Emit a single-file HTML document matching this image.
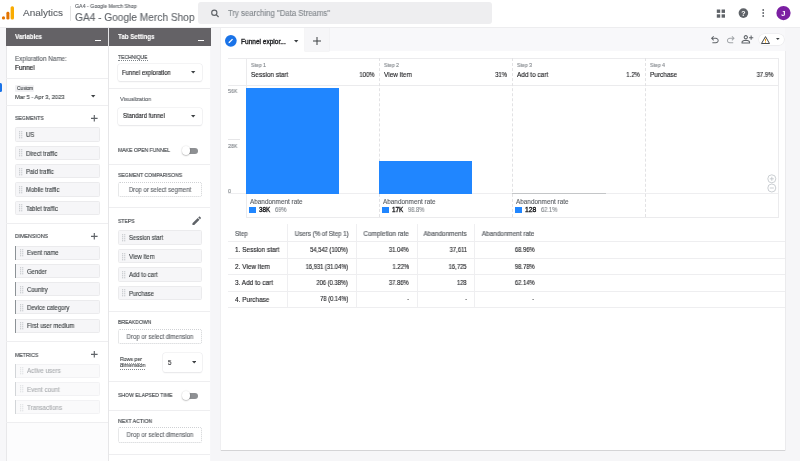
<!DOCTYPE html>
<html><head><meta charset="utf-8"><style>
html,body{margin:0;padding:0;width:800px;height:461px;overflow:hidden;background:#f7f7f9}
body{position:relative;font-family:"Liberation Sans", sans-serif}
body>div{position:absolute}
.t{white-space:nowrap;will-change:transform;-webkit-text-stroke:0.12px currentColor}
</style></head><body>
<div style="left:0px;top:0px;width:800px;height:461px;background:#f7f7f9"></div>
<div style="left:0px;top:0px;width:800px;height:27px;background:#fff"></div>
<div style="left:0px;top:27px;width:800px;height:1px;background:#ededef"></div>
<svg style="position:absolute;left:0;top:0" width="20" height="24"><circle cx="3.5" cy="17.9" r="1.6" fill="#e37400"/><rect x="6.4" y="11.8" width="3" height="7.8" rx="1.4" fill="#e37400"/><rect x="10.6" y="6.2" width="3.4" height="13.4" rx="1.5" fill="#f9ab00"/></svg>
<div class="t" style="left:23px;transform-origin:0 50%;top:6.14px;font-size:9.8px;line-height:13.72px;color:#5f6368;font-weight:400;transform:scaleX(1.0203);">Analytics</div>
<div style="left:70px;top:6px;width:0.8px;height:15px;background:#e3e3e3"></div>
<div class="t" style="left:75px;transform-origin:0 50%;top:3.09px;font-size:5.3px;line-height:7.42px;color:#5f6368;font-weight:400;transform:scaleX(0.9884);">GA4 - Google Merch Shop</div>
<div class="t" style="left:75px;transform-origin:0 50%;top:9.85px;font-size:10.5px;line-height:14.70px;color:#5f6368;font-weight:400;transform:scaleX(0.9658);">GA4 - Google Merch Shop</div>
<div style="left:198.3px;top:2.2px;width:294px;height:21.4px;background:#eeeef0;border-radius:3px"></div>
<svg style="position:absolute;left:210px;top:9px" width="10" height="9" viewBox="0 0 10 9"><circle cx="4.3" cy="3.7" r="2.6" fill="none" stroke="#5f6368" stroke-width="1.15"/><line x1="6.2" y1="5.6" x2="8.6" y2="8" stroke="#5f6368" stroke-width="1.3"/></svg>
<div class="t" style="left:227.8px;transform-origin:0 50%;top:7.72px;font-size:8.4px;line-height:11.76px;color:#80868b;font-weight:400;transform:scaleX(0.9281);">Try searching "Data Streams"</div>
<svg style="position:absolute;left:716px;top:8.5px" width="10" height="9"><rect x="0.8" y="0.5" width="3.4" height="3.4" fill="#5f6368"/><rect x="5.6" y="0.5" width="3.4" height="3.4" fill="#5f6368"/><rect x="0.8" y="5.3" width="3.4" height="3.4" fill="#5f6368"/><rect x="5.6" y="5.3" width="3.4" height="3.4" fill="#5f6368"/></svg>
<svg style="position:absolute;left:738px;top:8px;will-change:transform" width="11" height="11"><circle cx="5.4" cy="5.1" r="4.8" fill="#5f6368"/><text x="5.45" y="7.7" font-family="Liberation Sans" font-weight="700" font-size="7" fill="#fff" text-anchor="middle">?</text></svg>
<svg style="position:absolute;left:761px;top:9px" width="5" height="9"><circle cx="2.2" cy="1" r="0.9" fill="#5f6368"/><circle cx="2.2" cy="4" r="0.9" fill="#5f6368"/><circle cx="2.2" cy="7" r="0.9" fill="#5f6368"/></svg>
<svg style="position:absolute;left:776px;top:6px;will-change:transform" width="15" height="15"><circle cx="7.5" cy="7.1" r="7.1" fill="#7b1fa2"/><text x="7.3" y="9.8" font-family="Liberation Sans" font-weight="700" font-size="7.5" fill="#fff" text-anchor="middle">J</text></svg>
<div style="left:0px;top:82.5px;width:1.7px;height:9.5px;background:#1a73e8;border-radius:0 1.5px 1.5px 0"></div>
<div style="left:6px;top:28px;width:102.3px;height:18px;background:#646266"></div>
<div class="t" style="left:15px;transform-origin:0 50%;top:32.14px;font-size:6.8px;line-height:9.52px;color:#fff;font-weight:700;transform:scaleX(0.9042);">Variables</div>
<div style="left:95px;top:40px;width:6px;height:1.2px;background:#fff"></div>
<div style="left:6px;top:46px;width:102.3px;height:415px;background:#fff"></div>
<div style="left:6px;top:423px;width:102.3px;height:38px;background:#fcfcfd"></div>
<div style="left:5.5px;top:46px;width:0.8px;height:415px;background:#e8e8ea"></div>
<div style="left:108.3px;top:28px;width:0.8px;height:433px;background:#e6e6e8"></div>
<div class="t" style="left:15.2px;transform-origin:0 50%;top:54.30px;font-size:6.5px;line-height:9.10px;color:#5f6368;font-weight:400;transform:scaleX(0.9685);">Exploration Name:</div>
<div class="t" style="left:15.2px;transform-origin:0 50%;top:63.45px;font-size:6.5px;line-height:9.10px;color:#202124;font-weight:400;transform:scaleX(0.9811);-webkit-text-stroke:0.18px currentColor;">Funnel</div>
<div style="left:6px;top:78.2px;width:102.3px;height:0.8px;background:#eeeef0"></div>
<div style="left:14.9px;top:84.9px;width:19.5px;height:6.9px;background:#f1f1f3;border-radius:1px"></div>
<div class="t" style="left:17px;transform-origin:0 50%;top:85.00px;font-size:5px;line-height:7.00px;color:#3c4043;font-weight:400;transform:scaleX(0.9458);-webkit-text-stroke:0.1px currentColor;">Custom</div>
<div class="t" style="left:15.2px;transform-origin:0 50%;top:93.15px;font-size:6px;line-height:8.40px;color:#3c4043;font-weight:400;transform:scaleX(0.9655);">Mar 5 - Apr 3, 2023</div>
<svg style="position:absolute;left:91.2px;top:95.1px" width="4.9" height="3"><path d="M0 0 L4.4 0 L2.2 2.4200000000000004Z" fill="#3c4043"/></svg>
<div style="left:6px;top:105.2px;width:102.3px;height:0.8px;background:#eeeef0"></div>
<div class="t" style="left:15px;transform-origin:0 50%;top:114.40px;font-size:6.0px;line-height:8.40px;color:#4a4e52;font-weight:400;transform:scaleX(0.8523);-webkit-text-stroke:0.18px currentColor;">SEGMENTS</div>
<svg style="position:absolute;left:89.7px;top:113.9px" width="8.6" height="8.6"><path d="M1 4.3H7.6M4.3 1V7.6" stroke="#5f6368" stroke-width="1.15"/></svg>
<div style="left:14.8px;top:127.3px;width:85px;height:14.4px;background:#f6f6f8;border:0.6px solid #ebebed;box-sizing:border-box;border-radius:1.5px"></div>
<svg style="position:absolute;left:19.2px;top:130.9px" width="4" height="8"><circle cx="0.7" cy="0.7" r="0.55" fill="#a6abb0"/><circle cx="2.8" cy="0.7" r="0.55" fill="#a6abb0"/><circle cx="0.7" cy="2.7" r="0.55" fill="#a6abb0"/><circle cx="2.8" cy="2.7" r="0.55" fill="#a6abb0"/><circle cx="0.7" cy="4.7" r="0.55" fill="#a6abb0"/><circle cx="2.8" cy="4.7" r="0.55" fill="#a6abb0"/><circle cx="0.7" cy="6.7" r="0.55" fill="#a6abb0"/><circle cx="2.8" cy="6.7" r="0.55" fill="#a6abb0"/></svg>
<div class="t" style="left:25.7px;transform-origin:0 50%;top:130.25px;font-size:6.5px;line-height:9.10px;color:#3c4043;font-weight:400;transform:scaleX(0.9100);">US</div>
<div style="left:14.8px;top:145.68px;width:85px;height:14.4px;background:#f6f6f8;border:0.6px solid #ebebed;box-sizing:border-box;border-radius:1.5px"></div>
<svg style="position:absolute;left:19.2px;top:149.28000000000003px" width="4" height="8"><circle cx="0.7" cy="0.7" r="0.55" fill="#a6abb0"/><circle cx="2.8" cy="0.7" r="0.55" fill="#a6abb0"/><circle cx="0.7" cy="2.7" r="0.55" fill="#a6abb0"/><circle cx="2.8" cy="2.7" r="0.55" fill="#a6abb0"/><circle cx="0.7" cy="4.7" r="0.55" fill="#a6abb0"/><circle cx="2.8" cy="4.7" r="0.55" fill="#a6abb0"/><circle cx="0.7" cy="6.7" r="0.55" fill="#a6abb0"/><circle cx="2.8" cy="6.7" r="0.55" fill="#a6abb0"/></svg>
<div class="t" style="left:25.7px;transform-origin:0 50%;top:148.63px;font-size:6.5px;line-height:9.10px;color:#3c4043;font-weight:400;transform:scaleX(0.9100);">Direct traffic</div>
<div style="left:14.8px;top:164.06px;width:85px;height:14.4px;background:#f6f6f8;border:0.6px solid #ebebed;box-sizing:border-box;border-radius:1.5px"></div>
<svg style="position:absolute;left:19.2px;top:167.66000000000003px" width="4" height="8"><circle cx="0.7" cy="0.7" r="0.55" fill="#a6abb0"/><circle cx="2.8" cy="0.7" r="0.55" fill="#a6abb0"/><circle cx="0.7" cy="2.7" r="0.55" fill="#a6abb0"/><circle cx="2.8" cy="2.7" r="0.55" fill="#a6abb0"/><circle cx="0.7" cy="4.7" r="0.55" fill="#a6abb0"/><circle cx="2.8" cy="4.7" r="0.55" fill="#a6abb0"/><circle cx="0.7" cy="6.7" r="0.55" fill="#a6abb0"/><circle cx="2.8" cy="6.7" r="0.55" fill="#a6abb0"/></svg>
<div class="t" style="left:25.7px;transform-origin:0 50%;top:167.01px;font-size:6.5px;line-height:9.10px;color:#3c4043;font-weight:400;transform:scaleX(0.9100);">Paid traffic</div>
<div style="left:14.8px;top:182.44px;width:85px;height:14.4px;background:#f6f6f8;border:0.6px solid #ebebed;box-sizing:border-box;border-radius:1.5px"></div>
<svg style="position:absolute;left:19.2px;top:186.04000000000002px" width="4" height="8"><circle cx="0.7" cy="0.7" r="0.55" fill="#a6abb0"/><circle cx="2.8" cy="0.7" r="0.55" fill="#a6abb0"/><circle cx="0.7" cy="2.7" r="0.55" fill="#a6abb0"/><circle cx="2.8" cy="2.7" r="0.55" fill="#a6abb0"/><circle cx="0.7" cy="4.7" r="0.55" fill="#a6abb0"/><circle cx="2.8" cy="4.7" r="0.55" fill="#a6abb0"/><circle cx="0.7" cy="6.7" r="0.55" fill="#a6abb0"/><circle cx="2.8" cy="6.7" r="0.55" fill="#a6abb0"/></svg>
<div class="t" style="left:25.7px;transform-origin:0 50%;top:185.39px;font-size:6.5px;line-height:9.10px;color:#3c4043;font-weight:400;transform:scaleX(0.9100);">Mobile traffic</div>
<div style="left:14.8px;top:200.82px;width:85px;height:14.4px;background:#f6f6f8;border:0.6px solid #ebebed;box-sizing:border-box;border-radius:1.5px"></div>
<svg style="position:absolute;left:19.2px;top:204.42000000000002px" width="4" height="8"><circle cx="0.7" cy="0.7" r="0.55" fill="#a6abb0"/><circle cx="2.8" cy="0.7" r="0.55" fill="#a6abb0"/><circle cx="0.7" cy="2.7" r="0.55" fill="#a6abb0"/><circle cx="2.8" cy="2.7" r="0.55" fill="#a6abb0"/><circle cx="0.7" cy="4.7" r="0.55" fill="#a6abb0"/><circle cx="2.8" cy="4.7" r="0.55" fill="#a6abb0"/><circle cx="0.7" cy="6.7" r="0.55" fill="#a6abb0"/><circle cx="2.8" cy="6.7" r="0.55" fill="#a6abb0"/></svg>
<div class="t" style="left:25.7px;transform-origin:0 50%;top:203.77px;font-size:6.5px;line-height:9.10px;color:#3c4043;font-weight:400;transform:scaleX(0.9100);">Tablet traffic</div>
<div style="left:6px;top:222.5px;width:102.3px;height:0.8px;background:#eeeef0"></div>
<div class="t" style="left:15px;transform-origin:0 50%;top:232.40px;font-size:6.0px;line-height:8.40px;color:#4a4e52;font-weight:400;transform:scaleX(0.8681);-webkit-text-stroke:0.18px currentColor;">DIMENSIONS</div>
<svg style="position:absolute;left:89.7px;top:231.89999999999998px" width="8.6" height="8.6"><path d="M1 4.3H7.6M4.3 1V7.6" stroke="#5f6368" stroke-width="1.15"/></svg>
<div style="left:15px;top:245.8px;width:84.7px;height:14px;background:#f6f6f8;border:0.6px solid #ebebed;box-sizing:border-box;border-radius:1.5px"></div>
<div style="left:15px;top:245.8px;width:1.3px;height:14px;background:#8c9296"></div>
<svg style="position:absolute;left:20.2px;top:249.10000000000002px" width="4" height="8"><circle cx="0.7" cy="0.7" r="0.55" fill="#a6abb0"/><circle cx="2.8" cy="0.7" r="0.55" fill="#a6abb0"/><circle cx="0.7" cy="2.7" r="0.55" fill="#a6abb0"/><circle cx="2.8" cy="2.7" r="0.55" fill="#a6abb0"/><circle cx="0.7" cy="4.7" r="0.55" fill="#a6abb0"/><circle cx="2.8" cy="4.7" r="0.55" fill="#a6abb0"/><circle cx="0.7" cy="6.7" r="0.55" fill="#a6abb0"/><circle cx="2.8" cy="6.7" r="0.55" fill="#a6abb0"/></svg>
<div class="t" style="left:26.9px;transform-origin:0 50%;top:248.45px;font-size:6.5px;line-height:9.10px;color:#3c4043;font-weight:400;transform:scaleX(0.9100);">Event name</div>
<div style="left:15px;top:264.0px;width:84.7px;height:14px;background:#f6f6f8;border:0.6px solid #ebebed;box-sizing:border-box;border-radius:1.5px"></div>
<div style="left:15px;top:264.0px;width:1.3px;height:14px;background:#8c9296"></div>
<svg style="position:absolute;left:20.2px;top:267.3px" width="4" height="8"><circle cx="0.7" cy="0.7" r="0.55" fill="#a6abb0"/><circle cx="2.8" cy="0.7" r="0.55" fill="#a6abb0"/><circle cx="0.7" cy="2.7" r="0.55" fill="#a6abb0"/><circle cx="2.8" cy="2.7" r="0.55" fill="#a6abb0"/><circle cx="0.7" cy="4.7" r="0.55" fill="#a6abb0"/><circle cx="2.8" cy="4.7" r="0.55" fill="#a6abb0"/><circle cx="0.7" cy="6.7" r="0.55" fill="#a6abb0"/><circle cx="2.8" cy="6.7" r="0.55" fill="#a6abb0"/></svg>
<div class="t" style="left:26.9px;transform-origin:0 50%;top:266.65px;font-size:6.5px;line-height:9.10px;color:#3c4043;font-weight:400;transform:scaleX(0.9100);">Gender</div>
<div style="left:15px;top:282.2px;width:84.7px;height:14px;background:#f6f6f8;border:0.6px solid #ebebed;box-sizing:border-box;border-radius:1.5px"></div>
<div style="left:15px;top:282.2px;width:1.3px;height:14px;background:#8c9296"></div>
<svg style="position:absolute;left:20.2px;top:285.5px" width="4" height="8"><circle cx="0.7" cy="0.7" r="0.55" fill="#a6abb0"/><circle cx="2.8" cy="0.7" r="0.55" fill="#a6abb0"/><circle cx="0.7" cy="2.7" r="0.55" fill="#a6abb0"/><circle cx="2.8" cy="2.7" r="0.55" fill="#a6abb0"/><circle cx="0.7" cy="4.7" r="0.55" fill="#a6abb0"/><circle cx="2.8" cy="4.7" r="0.55" fill="#a6abb0"/><circle cx="0.7" cy="6.7" r="0.55" fill="#a6abb0"/><circle cx="2.8" cy="6.7" r="0.55" fill="#a6abb0"/></svg>
<div class="t" style="left:26.9px;transform-origin:0 50%;top:284.85px;font-size:6.5px;line-height:9.10px;color:#3c4043;font-weight:400;transform:scaleX(0.9100);">Country</div>
<div style="left:15px;top:300.4px;width:84.7px;height:14px;background:#f6f6f8;border:0.6px solid #ebebed;box-sizing:border-box;border-radius:1.5px"></div>
<div style="left:15px;top:300.4px;width:1.3px;height:14px;background:#8c9296"></div>
<svg style="position:absolute;left:20.2px;top:303.7px" width="4" height="8"><circle cx="0.7" cy="0.7" r="0.55" fill="#a6abb0"/><circle cx="2.8" cy="0.7" r="0.55" fill="#a6abb0"/><circle cx="0.7" cy="2.7" r="0.55" fill="#a6abb0"/><circle cx="2.8" cy="2.7" r="0.55" fill="#a6abb0"/><circle cx="0.7" cy="4.7" r="0.55" fill="#a6abb0"/><circle cx="2.8" cy="4.7" r="0.55" fill="#a6abb0"/><circle cx="0.7" cy="6.7" r="0.55" fill="#a6abb0"/><circle cx="2.8" cy="6.7" r="0.55" fill="#a6abb0"/></svg>
<div class="t" style="left:26.9px;transform-origin:0 50%;top:303.05px;font-size:6.5px;line-height:9.10px;color:#3c4043;font-weight:400;transform:scaleX(0.9100);">Device category</div>
<div style="left:15px;top:318.6px;width:84.7px;height:14px;background:#f6f6f8;border:0.6px solid #ebebed;box-sizing:border-box;border-radius:1.5px"></div>
<div style="left:15px;top:318.6px;width:1.3px;height:14px;background:#8c9296"></div>
<svg style="position:absolute;left:20.2px;top:321.90000000000003px" width="4" height="8"><circle cx="0.7" cy="0.7" r="0.55" fill="#a6abb0"/><circle cx="2.8" cy="0.7" r="0.55" fill="#a6abb0"/><circle cx="0.7" cy="2.7" r="0.55" fill="#a6abb0"/><circle cx="2.8" cy="2.7" r="0.55" fill="#a6abb0"/><circle cx="0.7" cy="4.7" r="0.55" fill="#a6abb0"/><circle cx="2.8" cy="4.7" r="0.55" fill="#a6abb0"/><circle cx="0.7" cy="6.7" r="0.55" fill="#a6abb0"/><circle cx="2.8" cy="6.7" r="0.55" fill="#a6abb0"/></svg>
<div class="t" style="left:26.9px;transform-origin:0 50%;top:321.25px;font-size:6.5px;line-height:9.10px;color:#3c4043;font-weight:400;transform:scaleX(0.9100);">First user medium</div>
<div style="left:6px;top:340.6px;width:102.3px;height:0.8px;background:#eeeef0"></div>
<div class="t" style="left:15px;transform-origin:0 50%;top:350.50px;font-size:6.0px;line-height:8.40px;color:#4a4e52;font-weight:400;transform:scaleX(0.8630);-webkit-text-stroke:0.18px currentColor;">METRICS</div>
<svg style="position:absolute;left:89.7px;top:350.3px" width="8.6" height="8.6"><path d="M1 4.3H7.6M4.3 1V7.6" stroke="#5f6368" stroke-width="1.15"/></svg>
<div style="left:15px;top:363.5px;width:84.7px;height:14.2px;background:#fafafb;border:0.6px solid #f2f2f4;box-sizing:border-box;border-radius:1.5px"></div>
<div style="left:15px;top:363.5px;width:1.3px;height:14.2px;background:#d2d5d8"></div>
<svg style="position:absolute;left:20.2px;top:366.90000000000003px" width="4" height="8"><circle cx="0.7" cy="0.7" r="0.55" fill="#cfd2d5"/><circle cx="2.8" cy="0.7" r="0.55" fill="#cfd2d5"/><circle cx="0.7" cy="2.7" r="0.55" fill="#cfd2d5"/><circle cx="2.8" cy="2.7" r="0.55" fill="#cfd2d5"/><circle cx="0.7" cy="4.7" r="0.55" fill="#cfd2d5"/><circle cx="2.8" cy="4.7" r="0.55" fill="#cfd2d5"/><circle cx="0.7" cy="6.7" r="0.55" fill="#cfd2d5"/><circle cx="2.8" cy="6.7" r="0.55" fill="#cfd2d5"/></svg>
<div class="t" style="left:26.9px;transform-origin:0 50%;top:366.25px;font-size:6.5px;line-height:9.10px;color:#abaeb1;font-weight:400;transform:scaleX(0.9500);">Active users</div>
<div style="left:15px;top:381.85px;width:84.7px;height:14.2px;background:#fafafb;border:0.6px solid #f2f2f4;box-sizing:border-box;border-radius:1.5px"></div>
<div style="left:15px;top:381.85px;width:1.3px;height:14.2px;background:#d2d5d8"></div>
<svg style="position:absolute;left:20.2px;top:385.25000000000006px" width="4" height="8"><circle cx="0.7" cy="0.7" r="0.55" fill="#cfd2d5"/><circle cx="2.8" cy="0.7" r="0.55" fill="#cfd2d5"/><circle cx="0.7" cy="2.7" r="0.55" fill="#cfd2d5"/><circle cx="2.8" cy="2.7" r="0.55" fill="#cfd2d5"/><circle cx="0.7" cy="4.7" r="0.55" fill="#cfd2d5"/><circle cx="2.8" cy="4.7" r="0.55" fill="#cfd2d5"/><circle cx="0.7" cy="6.7" r="0.55" fill="#cfd2d5"/><circle cx="2.8" cy="6.7" r="0.55" fill="#cfd2d5"/></svg>
<div class="t" style="left:26.9px;transform-origin:0 50%;top:384.60px;font-size:6.5px;line-height:9.10px;color:#abaeb1;font-weight:400;transform:scaleX(0.9500);">Event count</div>
<div style="left:15px;top:400.2px;width:84.7px;height:14.2px;background:#fafafb;border:0.6px solid #f2f2f4;box-sizing:border-box;border-radius:1.5px"></div>
<div style="left:15px;top:400.2px;width:1.3px;height:14.2px;background:#d2d5d8"></div>
<svg style="position:absolute;left:20.2px;top:403.6px" width="4" height="8"><circle cx="0.7" cy="0.7" r="0.55" fill="#cfd2d5"/><circle cx="2.8" cy="0.7" r="0.55" fill="#cfd2d5"/><circle cx="0.7" cy="2.7" r="0.55" fill="#cfd2d5"/><circle cx="2.8" cy="2.7" r="0.55" fill="#cfd2d5"/><circle cx="0.7" cy="4.7" r="0.55" fill="#cfd2d5"/><circle cx="2.8" cy="4.7" r="0.55" fill="#cfd2d5"/><circle cx="0.7" cy="6.7" r="0.55" fill="#cfd2d5"/><circle cx="2.8" cy="6.7" r="0.55" fill="#cfd2d5"/></svg>
<div class="t" style="left:26.9px;transform-origin:0 50%;top:402.95px;font-size:6.5px;line-height:9.10px;color:#abaeb1;font-weight:400;transform:scaleX(0.9500);">Transactions</div>
<div style="left:6px;top:422.2px;width:102.3px;height:0.8px;background:#eeeef0"></div>
<div style="left:109.1px;top:28px;width:101.9px;height:18px;background:#646266"></div>
<div class="t" style="left:118px;transform-origin:0 50%;top:32.14px;font-size:6.8px;line-height:9.52px;color:#fff;font-weight:700;transform:scaleX(0.9061);">Tab Settings</div>
<div style="left:198px;top:40px;width:6px;height:1.2px;background:#fff"></div>
<div style="left:109.1px;top:46px;width:101.4px;height:415px;background:#fff"></div>
<div style="left:210.5px;top:28px;width:0.8px;height:433px;background:#e6e6e8"></div>
<div class="t" style="left:118.1px;transform-origin:0 50%;top:52.65px;font-size:6.0px;line-height:8.40px;color:#4a4e52;font-weight:400;transform:scaleX(0.8347);-webkit-text-stroke:0.18px currentColor;">TECHNIQUE</div>
<div style="left:118px;top:60px;width:30px;height:0;border-top:0.8px dotted #80868b"></div>
<div style="left:117.7px;top:63.7px;width:84px;height:17.6px;background:#fff;border-radius:2.5px;box-shadow:0 0 0 0.6px #ededef, 0 0.8px 1.3px #e2e2e4"></div>
<div class="t" style="left:122.3px;transform-origin:0 50%;top:67.60px;font-size:6.5px;line-height:9.10px;color:#202124;font-weight:400;transform:scaleX(0.9124);">Funnel exploration</div>
<svg style="position:absolute;left:191.39999999999998px;top:71.3px" width="4.9" height="3"><path d="M0 0 L4.4 0 L2.2 2.4200000000000004Z" fill="#3c4043"/></svg>
<div style="left:109.1px;top:88px;width:101.4px;height:0.8px;background:#eeeef0"></div>
<div class="t" style="left:119.8px;transform-origin:0 50%;top:95.19px;font-size:5.8px;line-height:8.12px;color:#5f6368;font-weight:400;transform:scaleX(0.9583);">Visualization</div>
<div style="left:117.9px;top:107.8px;width:83.8px;height:17.3px;background:#fff;border-radius:2.5px;box-shadow:0 0 0 0.6px #ededef, 0 0.8px 1.3px #e2e2e4"></div>
<div class="t" style="left:122.5px;transform-origin:0 50%;top:111.05px;font-size:6.5px;line-height:9.10px;color:#202124;font-weight:400;transform:scaleX(0.9106);">Standard funnel</div>
<svg style="position:absolute;left:191.39999999999998px;top:115.25px" width="4.9" height="3"><path d="M0 0 L4.4 0 L2.2 2.4200000000000004Z" fill="#3c4043"/></svg>
<div class="t" style="left:118px;transform-origin:0 50%;top:146.10px;font-size:6.0px;line-height:8.40px;color:#4a4e52;font-weight:400;transform:scaleX(0.8475);-webkit-text-stroke:0.18px currentColor;">MAKE OPEN FUNNEL</div>
<div style="left:185.3px;top:147.5px;width:13px;height:6.2px;background:#8e9093;border-radius:3.1px"></div>
<div style="left:182.3px;top:146.4px;width:8.2px;height:8.2px;background:#fff;border-radius:50%;box-shadow:0 0.4px 1.4px rgba(0,0,0,0.4)"></div>
<div style="left:109.1px;top:163.6px;width:101.4px;height:0.8px;background:#eeeef0"></div>
<div class="t" style="left:118px;transform-origin:0 50%;top:171.30px;font-size:6.0px;line-height:8.40px;color:#4a4e52;font-weight:400;transform:scaleX(0.8470);-webkit-text-stroke:0.18px currentColor;">SEGMENT COMPARISONS</div>
<div style="left:117.8px;top:181.9px;width:84.4px;height:14.9px;border:0.9px dotted #cfd1d4;box-sizing:border-box;border-radius:2px"></div>
<div class="t" style="left:60.0px;width:200px;text-align:center;transform-origin:50% 50%;top:185.00px;font-size:6.5px;line-height:9.10px;color:#5f6368;font-weight:400;transform:scaleX(0.9285);">Drop or select segment</div>
<div style="left:109.1px;top:207.2px;width:101.4px;height:0.8px;background:#eeeef0"></div>
<div class="t" style="left:118px;transform-origin:0 50%;top:217.30px;font-size:6.0px;line-height:8.40px;color:#4a4e52;font-weight:400;transform:scaleX(0.8381);-webkit-text-stroke:0.18px currentColor;">STEPS</div>
<svg style="position:absolute;left:190.9px;top:215.3px" width="11.5" height="11.5" viewBox="0 0 24 24"><path d="M3 17.25V21h3.75L17.81 9.94l-3.75-3.75L3 17.25zM20.71 7.04a1 1 0 000-1.41l-2.34-2.34a1 1 0 00-1.41 0l-1.83 1.83 3.75 3.75 1.83-1.83z" fill="#5f6368"/></svg>
<div style="left:117.8px;top:230.4px;width:84.4px;height:14.6px;background:#f6f6f8;border:0.6px solid #ebebed;box-sizing:border-box;border-radius:1.5px"></div>
<svg style="position:absolute;left:121.8px;top:234.10000000000002px" width="4" height="8"><circle cx="0.7" cy="0.7" r="0.55" fill="#a6abb0"/><circle cx="2.8" cy="0.7" r="0.55" fill="#a6abb0"/><circle cx="0.7" cy="2.7" r="0.55" fill="#a6abb0"/><circle cx="2.8" cy="2.7" r="0.55" fill="#a6abb0"/><circle cx="0.7" cy="4.7" r="0.55" fill="#a6abb0"/><circle cx="2.8" cy="4.7" r="0.55" fill="#a6abb0"/><circle cx="0.7" cy="6.7" r="0.55" fill="#a6abb0"/><circle cx="2.8" cy="6.7" r="0.55" fill="#a6abb0"/></svg>
<div class="t" style="left:128.6px;transform-origin:0 50%;top:233.45px;font-size:6.5px;line-height:9.10px;color:#3c4043;font-weight:400;transform:scaleX(0.9100);">Session start</div>
<div style="left:117.8px;top:248.8px;width:84.4px;height:14.6px;background:#f6f6f8;border:0.6px solid #ebebed;box-sizing:border-box;border-radius:1.5px"></div>
<svg style="position:absolute;left:121.8px;top:252.5px" width="4" height="8"><circle cx="0.7" cy="0.7" r="0.55" fill="#a6abb0"/><circle cx="2.8" cy="0.7" r="0.55" fill="#a6abb0"/><circle cx="0.7" cy="2.7" r="0.55" fill="#a6abb0"/><circle cx="2.8" cy="2.7" r="0.55" fill="#a6abb0"/><circle cx="0.7" cy="4.7" r="0.55" fill="#a6abb0"/><circle cx="2.8" cy="4.7" r="0.55" fill="#a6abb0"/><circle cx="0.7" cy="6.7" r="0.55" fill="#a6abb0"/><circle cx="2.8" cy="6.7" r="0.55" fill="#a6abb0"/></svg>
<div class="t" style="left:128.6px;transform-origin:0 50%;top:251.85px;font-size:6.5px;line-height:9.10px;color:#3c4043;font-weight:400;transform:scaleX(0.9100);">View item</div>
<div style="left:117.8px;top:267.2px;width:84.4px;height:14.6px;background:#f6f6f8;border:0.6px solid #ebebed;box-sizing:border-box;border-radius:1.5px"></div>
<svg style="position:absolute;left:121.8px;top:270.9px" width="4" height="8"><circle cx="0.7" cy="0.7" r="0.55" fill="#a6abb0"/><circle cx="2.8" cy="0.7" r="0.55" fill="#a6abb0"/><circle cx="0.7" cy="2.7" r="0.55" fill="#a6abb0"/><circle cx="2.8" cy="2.7" r="0.55" fill="#a6abb0"/><circle cx="0.7" cy="4.7" r="0.55" fill="#a6abb0"/><circle cx="2.8" cy="4.7" r="0.55" fill="#a6abb0"/><circle cx="0.7" cy="6.7" r="0.55" fill="#a6abb0"/><circle cx="2.8" cy="6.7" r="0.55" fill="#a6abb0"/></svg>
<div class="t" style="left:128.6px;transform-origin:0 50%;top:270.25px;font-size:6.5px;line-height:9.10px;color:#3c4043;font-weight:400;transform:scaleX(0.9100);">Add to cart</div>
<div style="left:117.8px;top:285.6px;width:84.4px;height:14.6px;background:#f6f6f8;border:0.6px solid #ebebed;box-sizing:border-box;border-radius:1.5px"></div>
<svg style="position:absolute;left:121.8px;top:289.3px" width="4" height="8"><circle cx="0.7" cy="0.7" r="0.55" fill="#a6abb0"/><circle cx="2.8" cy="0.7" r="0.55" fill="#a6abb0"/><circle cx="0.7" cy="2.7" r="0.55" fill="#a6abb0"/><circle cx="2.8" cy="2.7" r="0.55" fill="#a6abb0"/><circle cx="0.7" cy="4.7" r="0.55" fill="#a6abb0"/><circle cx="2.8" cy="4.7" r="0.55" fill="#a6abb0"/><circle cx="0.7" cy="6.7" r="0.55" fill="#a6abb0"/><circle cx="2.8" cy="6.7" r="0.55" fill="#a6abb0"/></svg>
<div class="t" style="left:128.6px;transform-origin:0 50%;top:288.65px;font-size:6.5px;line-height:9.10px;color:#3c4043;font-weight:400;transform:scaleX(0.9100);">Purchase</div>
<div style="left:109.1px;top:311px;width:101.4px;height:0.8px;background:#eeeef0"></div>
<div class="t" style="left:118px;transform-origin:0 50%;top:317.80px;font-size:6.0px;line-height:8.40px;color:#4a4e52;font-weight:400;transform:scaleX(0.8489);-webkit-text-stroke:0.18px currentColor;">BREAKDOWN</div>
<div style="left:117.8px;top:329px;width:84.4px;height:15.3px;border:0.9px dotted #cfd1d4;box-sizing:border-box;border-radius:2px"></div>
<div class="t" style="left:60.0px;width:200px;text-align:center;transform-origin:50% 50%;top:332.30px;font-size:6.5px;line-height:9.10px;color:#5f6368;font-weight:400;transform:scaleX(0.9276);">Drop or select dimension</div>
<div class="t" style="left:119.7px;transform-origin:0 50%;top:355.47px;font-size:5.9px;line-height:8.26px;color:#3c4043;font-weight:400;transform:scaleX(0.8839);">Rows per</div>
<div class="t" style="left:119.7px;transform-origin:0 50%;top:361.37px;font-size:5.9px;line-height:8.26px;color:#3c4043;font-weight:400;transform:scaleX(0.9494);">dimension</div>
<div style="left:119.7px;top:362.9px;width:22.5px;height:0;border-top:0.8px dotted #a0a3a6"></div>
<div style="left:119.7px;top:369.2px;width:25.6px;height:0;border-top:0.8px dotted #80868b"></div>
<div style="left:162.6px;top:353px;width:39.4px;height:18.6px;background:#fff;border-radius:2.5px;box-shadow:0 0 0 0.6px #ededef, 0 0.8px 1.3px #e2e2e4"></div>
<div class="t" style="left:167.8px;transform-origin:0 50%;top:357.75px;font-size:6.5px;line-height:9.10px;color:#202124;font-weight:400;transform:scaleX(0.9100);">5</div>
<svg style="position:absolute;left:191.5px;top:361.1px" width="4.9" height="3"><path d="M0 0 L4.4 0 L2.2 2.4200000000000004Z" fill="#3c4043"/></svg>
<div style="left:109.1px;top:381px;width:101.4px;height:0.8px;background:#eeeef0"></div>
<div class="t" style="left:118px;transform-origin:0 50%;top:391.30px;font-size:6.0px;line-height:8.40px;color:#4a4e52;font-weight:400;transform:scaleX(0.8512);-webkit-text-stroke:0.18px currentColor;">SHOW ELAPSED TIME</div>
<div style="left:185.3px;top:392.5px;width:13px;height:6.2px;background:#8e9093;border-radius:3.1px"></div>
<div style="left:182.3px;top:391.4px;width:8.2px;height:8.2px;background:#fff;border-radius:50%;box-shadow:0 0.4px 1.4px rgba(0,0,0,0.4)"></div>
<div style="left:109.1px;top:409.6px;width:101.4px;height:0.8px;background:#eeeef0"></div>
<div class="t" style="left:118px;transform-origin:0 50%;top:416.80px;font-size:6.0px;line-height:8.40px;color:#4a4e52;font-weight:400;transform:scaleX(0.8545);-webkit-text-stroke:0.18px currentColor;">NEXT ACTION</div>
<div style="left:117.8px;top:427px;width:84.4px;height:16.2px;border:0.9px dotted #cfd1d4;box-sizing:border-box;border-radius:2px"></div>
<div class="t" style="left:60.0px;width:200px;text-align:center;transform-origin:50% 50%;top:430.15px;font-size:6.5px;line-height:9.10px;color:#5f6368;font-weight:400;transform:scaleX(0.9276);">Drop or select dimension</div>
<div style="left:109.1px;top:453.8px;width:101.4px;height:0.8px;background:#eeeef0"></div>
<div style="left:211.3px;top:28px;width:588.7px;height:433px;background:#f6f6f8"></div>
<div style="left:221px;top:28px;width:564.3px;height:23px;background:#f8f8fa"></div>
<div style="left:221px;top:51px;width:564.3px;height:399.5px;background:#fff"></div>
<div style="left:221px;top:450px;width:564.3px;height:1px;background:#d4d4d6"></div>
<div style="left:785px;top:51px;width:0.8px;height:400px;background:#ebebed"></div>
<div style="left:220.4px;top:28px;width:0.7px;height:423px;background:#efeff1"></div>
<div style="left:221px;top:28px;width:84px;height:23px;background:#fff"></div>
<svg style="position:absolute;left:224.95px;top:35.35px" width="12" height="12"><circle cx="5.85" cy="5.85" r="5.85" fill="#1a73e8"/><path d="M3.5 8.2 L3.7 7.1 L7.1 3.7 L8.0 4.6 L4.6 8.0Z" fill="#fff"/></svg>
<div class="t" style="left:240.9px;transform-origin:0 50%;top:36.55px;font-size:6.5px;line-height:9.10px;color:#202124;font-weight:400;transform:scaleX(1.0056);-webkit-text-stroke:0.32px currentColor;">Funnel explor...</div>
<svg style="position:absolute;left:293.9px;top:40.0px" width="4.9" height="3"><path d="M0 0 L4.4 0 L2.2 2.4200000000000004Z" fill="#3c4043"/></svg>
<div style="left:305.3px;top:28px;width:23.4px;height:22.6px;background:#f6f6f8;box-shadow:0 0 0 0.5px #ececee"></div>
<svg style="position:absolute;left:311.6px;top:36.25px" width="10" height="10"><path d="M1 5H9M5 1V9" stroke="#3c4043" stroke-width="1.0"/></svg>
<svg style="position:absolute;left:708.5px;top:33.5px" width="11.6" height="11.6" viewBox="0 -960 960 960"><path d="M280-200v-80h284q63 0 109.5-40T720-420q0-60-46.5-100T564-560H312l104 104-56 56-200-200 200-200 56 56-104 104h252q97 0 166.5 63T800-420q0 94-69.5 157T564-200H280Z" fill="#5f6368"/></svg>
<svg style="position:absolute;left:724.6px;top:33.5px" width="11.6" height="11.6" viewBox="0 -960 960 960"><path d="M396-200q-97 0-166.5-63T160-420q0-94 69.5-157T396-640h252L544-744l56-56 200 200-200 200-56-56 104-104H396q-63 0-109.5 40T240-420q0 60 46.5 100T396-280h284v80H396Z" fill="#a0a4a8"/></svg>
<svg style="position:absolute;left:741.0px;top:34.0px" width="12.8" height="12.8" viewBox="0 -960 960 960"><path d="M720-520v-120H600v-80h120v-120h80v120h120v80H800v120h-80Zm-360-40q-66 0-113-47t-47-113q0-66 47-113t113-47q66 0 113 47t47 113q0 66-47 113t-113 47ZM40-240v-112q0-34 17.5-62.5T104-458q62-31 126-46.5T360-520q66 0 130 15.5T616-458q29 15 46.5 43.5T680-352v112H40Zm80-80h480v-32q0-11-5.5-20T580-386q-54-27-109-40.5T360-440q-56 0-111 13.5T140-386q-9 5-14.5 14t-5.5 20v32Zm240-320q33 0 56.5-23.5T440-720q0-33-23.5-56.5T360-800q-33 0-56.5 23.5T280-720q0 33 23.5 56.5T360-640Z" fill="#5f6368"/></svg>
<div style="left:758.7px;top:33.8px;width:25.2px;height:11.7px;background:#fff;border-radius:6px;box-shadow:0 0 0 0.6px #e8e8ea, 0 0.5px 1px #ececee"></div>
<svg style="position:absolute;left:761.3px;top:35.6px" width="9" height="8" viewBox="0 0 18 16"><path d="M9 1.2 L17 15 L1 15Z" fill="none" stroke="#3c4043" stroke-width="1.9" stroke-linejoin="round"/><rect x="8.1" y="5.6" width="1.9" height="5" fill="#f29900"/><rect x="8.1" y="11.6" width="1.9" height="1.8" fill="#f29900"/></svg>
<svg style="position:absolute;left:775.6px;top:38.199999999999996px" width="4.1" height="3"><path d="M0 0 L3.6 0 L1.8 1.9800000000000002Z" fill="#3c4043"/></svg>
<div style="left:228px;top:58.4px;width:550.3px;height:0.8px;background:#ebebed"></div>
<div style="left:246.4px;top:58.4px;width:0.8px;height:159px;background:#ebebed"></div>
<div style="left:777.9px;top:58.4px;width:0.8px;height:159px;background:#ebebed"></div>
<div style="left:228px;top:84.8px;width:550.3px;height:0.8px;background:#ebebed"></div>
<div style="left:246.4px;top:217px;width:532.3px;height:0.8px;background:#ebebed"></div>
<div style="left:228px;top:193.3px;width:550.3px;height:0.7px;background:#eeeef0"></div>
<div style="left:379.25px;top:58.4px;width:0;height:159px;border-left:0.8px dashed #e2e2e4"></div>
<div style="left:512.25px;top:58.4px;width:0;height:159px;border-left:0.8px dashed #e2e2e4"></div>
<div style="left:645.25px;top:58.4px;width:0;height:159px;border-left:0.8px dashed #e2e2e4"></div>
<div style="left:228px;top:139.3px;width:12px;height:0.7px;background:#e6e6e8"></div>
<div class="t" style="left:228.3px;transform-origin:0 50%;top:86.94px;font-size:5.8px;line-height:8.12px;color:#80868b;font-weight:400;transform:scaleX(0.9198);">56K</div>
<div class="t" style="left:228.3px;transform-origin:0 50%;top:141.54px;font-size:5.8px;line-height:8.12px;color:#80868b;font-weight:400;transform:scaleX(0.9198);">28K</div>
<div class="t" style="left:228.3px;transform-origin:0 50%;top:186.54px;font-size:5.8px;line-height:8.12px;color:#80868b;font-weight:400;transform:scaleX(0.9100);">0</div>
<div class="t" style="left:250.9px;transform-origin:0 50%;top:62.18px;font-size:5.6px;line-height:7.84px;color:#80868b;font-weight:400;transform:scaleX(0.9266);">Step 1</div>
<div class="t" style="left:250.9px;transform-origin:0 50%;top:69.95px;font-size:6.5px;line-height:9.10px;color:#202124;font-weight:400;transform:scaleX(0.9900);">Session start</div>
<div class="t" style="right:425.8px;transform-origin:100% 50%;top:69.95px;font-size:6.5px;line-height:9.10px;color:#202124;font-weight:400;transform:scaleX(0.9100);">100%</div>
<div style="left:246.4px;top:88.0px;width:92.9px;height:105.6px;background:#2086ff"></div>
<div class="t" style="left:249.6px;transform-origin:0 50%;top:197.97px;font-size:6.4px;line-height:8.96px;color:#5f6368;font-weight:400;">Abandonment rate</div>
<div style="left:249.20000000000002px;top:206.9px;width:6.7px;height:6.0px;background:#2086ff"></div>
<div class="t" style="left:258.9px;transform-origin:0 50%;top:205.84px;font-size:6.3px;line-height:8.82px;color:#202124;font-weight:400;transform:scaleX(1.0072);-webkit-text-stroke:0.35px currentColor;">38K</div>
<div class="t" style="left:275.1px;transform-origin:0 50%;top:205.84px;font-size:6.3px;line-height:8.82px;color:#80868b;font-weight:400;transform:scaleX(0.9100);">69%</div>
<div class="t" style="left:383.9px;transform-origin:0 50%;top:62.18px;font-size:5.6px;line-height:7.84px;color:#80868b;font-weight:400;transform:scaleX(0.9266);">Step 2</div>
<div class="t" style="left:383.9px;transform-origin:0 50%;top:69.95px;font-size:6.5px;line-height:9.10px;color:#202124;font-weight:400;transform:scaleX(0.9900);">View item</div>
<div class="t" style="right:292.8px;transform-origin:100% 50%;top:69.95px;font-size:6.5px;line-height:9.10px;color:#202124;font-weight:400;transform:scaleX(0.9100);">31%</div>
<div style="left:379.4px;top:161.2px;width:92.9px;height:32.400000000000006px;background:#2086ff"></div>
<div class="t" style="left:382.59999999999997px;transform-origin:0 50%;top:197.97px;font-size:6.4px;line-height:8.96px;color:#5f6368;font-weight:400;">Abandonment rate</div>
<div style="left:382.2px;top:206.9px;width:6.7px;height:6.0px;background:#2086ff"></div>
<div class="t" style="left:391.9px;transform-origin:0 50%;top:205.84px;font-size:6.3px;line-height:8.82px;color:#202124;font-weight:400;transform:scaleX(1.0072);-webkit-text-stroke:0.35px currentColor;">17K</div>
<div class="t" style="left:408.09999999999997px;transform-origin:0 50%;top:205.84px;font-size:6.3px;line-height:8.82px;color:#80868b;font-weight:400;transform:scaleX(0.9100);">98.8%</div>
<div class="t" style="left:516.9px;transform-origin:0 50%;top:62.18px;font-size:5.6px;line-height:7.84px;color:#80868b;font-weight:400;transform:scaleX(0.9266);">Step 3</div>
<div class="t" style="left:516.9px;transform-origin:0 50%;top:69.95px;font-size:6.5px;line-height:9.10px;color:#202124;font-weight:400;transform:scaleX(0.9900);">Add to cart</div>
<div class="t" style="right:159.80000000000007px;transform-origin:100% 50%;top:69.95px;font-size:6.5px;line-height:9.10px;color:#202124;font-weight:400;transform:scaleX(0.9100);">1.2%</div>
<div style="left:512.4px;top:193.1px;width:93.2px;height:0.6px;background:#c4c6c8"></div>
<div class="t" style="left:515.6px;transform-origin:0 50%;top:197.97px;font-size:6.4px;line-height:8.96px;color:#5f6368;font-weight:400;">Abandonment rate</div>
<div style="left:515.1999999999999px;top:206.9px;width:6.7px;height:6.0px;background:#2086ff"></div>
<div class="t" style="left:524.9px;transform-origin:0 50%;top:205.84px;font-size:6.3px;line-height:8.82px;color:#202124;font-weight:400;transform:scaleX(1.0746);-webkit-text-stroke:0.35px currentColor;">128</div>
<div class="t" style="left:541.1px;transform-origin:0 50%;top:205.84px;font-size:6.3px;line-height:8.82px;color:#80868b;font-weight:400;transform:scaleX(0.9100);">62.1%</div>
<div class="t" style="left:649.9px;transform-origin:0 50%;top:62.18px;font-size:5.6px;line-height:7.84px;color:#80868b;font-weight:400;transform:scaleX(0.9266);">Step 4</div>
<div class="t" style="left:649.9px;transform-origin:0 50%;top:69.95px;font-size:6.5px;line-height:9.10px;color:#202124;font-weight:400;transform:scaleX(0.9900);">Purchase</div>
<div class="t" style="right:26.800000000000068px;transform-origin:100% 50%;top:69.95px;font-size:6.5px;line-height:9.10px;color:#202124;font-weight:400;transform:scaleX(0.9100);">37.9%</div>
<svg style="position:absolute;left:766px;top:173px" width="12" height="20"><circle cx="5.8" cy="5.8" r="4" fill="none" stroke="#bdc1c6" stroke-width="0.8"/><path d="M3.8 5.8h4M5.8 3.8v4" stroke="#bdc1c6" stroke-width="0.8"/><circle cx="5.8" cy="15" r="4" fill="none" stroke="#bdc1c6" stroke-width="0.8"/><path d="M3.8 15h4" stroke="#bdc1c6" stroke-width="0.8"/></svg>
<div style="left:286.6px;top:224px;width:0.8px;height:83.5px;background:#efeff1"></div>
<div style="left:356.3px;top:224px;width:0.8px;height:83.5px;background:#efeff1"></div>
<div style="left:416.6px;top:224px;width:0.8px;height:83.5px;background:#efeff1"></div>
<div style="left:474.3px;top:224px;width:0.8px;height:83.5px;background:#efeff1"></div>
<div style="left:227.5px;top:241.2px;width:557px;height:0.8px;background:#eeeef0"></div>
<div style="left:227.5px;top:257.7px;width:557px;height:0.8px;background:#eeeef0"></div>
<div style="left:227.5px;top:274.1px;width:557px;height:0.8px;background:#eeeef0"></div>
<div style="left:227.5px;top:290.5px;width:557px;height:0.8px;background:#eeeef0"></div>
<div style="left:227.5px;top:306.8px;width:557px;height:0.8px;background:#eeeef0"></div>
<div class="t" style="left:235px;transform-origin:0 50%;top:228.55px;font-size:6.5px;line-height:9.10px;color:#5f6368;font-weight:400;transform:scaleX(0.9533);-webkit-text-stroke:0.2px currentColor;">Step</div>
<div class="t" style="right:451.75px;transform-origin:100% 50%;top:228.55px;font-size:6.5px;line-height:9.10px;color:#5f6368;font-weight:400;transform:scaleX(0.9521);-webkit-text-stroke:0.2px currentColor;">Users (% of Step 1)</div>
<div class="t" style="right:391.25px;transform-origin:100% 50%;top:228.55px;font-size:6.5px;line-height:9.10px;color:#5f6368;font-weight:400;transform:scaleX(0.9915);-webkit-text-stroke:0.2px currentColor;">Completion rate</div>
<div class="t" style="right:333px;transform-origin:100% 50%;top:228.55px;font-size:6.5px;line-height:9.10px;color:#5f6368;font-weight:400;transform:scaleX(0.9889);-webkit-text-stroke:0.2px currentColor;">Abandonments</div>
<div class="t" style="right:265.5px;transform-origin:100% 50%;top:228.55px;font-size:6.5px;line-height:9.10px;color:#5f6368;font-weight:400;transform:scaleX(0.9863);-webkit-text-stroke:0.2px currentColor;">Abandonment rate</div>
<div class="t" style="left:235.3px;transform-origin:0 50%;top:245.35px;font-size:6.5px;line-height:9.10px;color:#202124;font-weight:400;transform:scaleX(0.9900);">1. Session start</div>
<div class="t" style="right:451.7px;transform-origin:100% 50%;top:246.02px;font-size:6.4px;line-height:8.96px;color:#202124;font-weight:400;transform:scaleX(0.9000);">54,542 (100%)</div>
<div class="t" style="right:391.2px;transform-origin:100% 50%;top:246.02px;font-size:6.4px;line-height:8.96px;color:#202124;font-weight:400;transform:scaleX(0.9150);">31.04%</div>
<div class="t" style="right:333px;transform-origin:100% 50%;top:246.02px;font-size:6.4px;line-height:8.96px;color:#202124;font-weight:400;transform:scaleX(0.9150);">37,611</div>
<div class="t" style="right:265.5px;transform-origin:100% 50%;top:246.02px;font-size:6.4px;line-height:8.96px;color:#202124;font-weight:400;transform:scaleX(0.9150);">68.96%</div>
<div class="t" style="left:235.3px;transform-origin:0 50%;top:261.95px;font-size:6.5px;line-height:9.10px;color:#202124;font-weight:400;transform:scaleX(0.9900);">2. View item</div>
<div class="t" style="right:451.7px;transform-origin:100% 50%;top:262.62px;font-size:6.4px;line-height:8.96px;color:#202124;font-weight:400;transform:scaleX(0.9000);">16,931 (31.04%)</div>
<div class="t" style="right:391.2px;transform-origin:100% 50%;top:262.62px;font-size:6.4px;line-height:8.96px;color:#202124;font-weight:400;transform:scaleX(0.9150);">1.22%</div>
<div class="t" style="right:333px;transform-origin:100% 50%;top:262.62px;font-size:6.4px;line-height:8.96px;color:#202124;font-weight:400;transform:scaleX(0.9150);">16,725</div>
<div class="t" style="right:265.5px;transform-origin:100% 50%;top:262.62px;font-size:6.4px;line-height:8.96px;color:#202124;font-weight:400;transform:scaleX(0.9150);">98.78%</div>
<div class="t" style="left:235.3px;transform-origin:0 50%;top:278.35px;font-size:6.5px;line-height:9.10px;color:#202124;font-weight:400;transform:scaleX(0.9900);">3. Add to cart</div>
<div class="t" style="right:451.7px;transform-origin:100% 50%;top:279.02px;font-size:6.4px;line-height:8.96px;color:#202124;font-weight:400;transform:scaleX(0.9000);">206 (0.38%)</div>
<div class="t" style="right:391.2px;transform-origin:100% 50%;top:279.02px;font-size:6.4px;line-height:8.96px;color:#202124;font-weight:400;transform:scaleX(0.9150);">37.86%</div>
<div class="t" style="right:333px;transform-origin:100% 50%;top:279.02px;font-size:6.4px;line-height:8.96px;color:#202124;font-weight:400;transform:scaleX(0.9150);">128</div>
<div class="t" style="right:265.5px;transform-origin:100% 50%;top:279.02px;font-size:6.4px;line-height:8.96px;color:#202124;font-weight:400;transform:scaleX(0.9150);">62.14%</div>
<div class="t" style="left:235.3px;transform-origin:0 50%;top:294.75px;font-size:6.5px;line-height:9.10px;color:#202124;font-weight:400;transform:scaleX(0.9900);">4. Purchase</div>
<div class="t" style="right:451.7px;transform-origin:100% 50%;top:295.42px;font-size:6.4px;line-height:8.96px;color:#202124;font-weight:400;transform:scaleX(0.9000);">78 (0.14%)</div>
<div class="t" style="right:391.2px;transform-origin:100% 50%;top:295.42px;font-size:6.4px;line-height:8.96px;color:#202124;font-weight:400;transform:scaleX(0.9150);">-</div>
<div class="t" style="right:333px;transform-origin:100% 50%;top:295.42px;font-size:6.4px;line-height:8.96px;color:#202124;font-weight:400;transform:scaleX(0.9150);">-</div>
<div class="t" style="right:265.5px;transform-origin:100% 50%;top:295.42px;font-size:6.4px;line-height:8.96px;color:#202124;font-weight:400;transform:scaleX(0.9150);">-</div>
</body></html>
